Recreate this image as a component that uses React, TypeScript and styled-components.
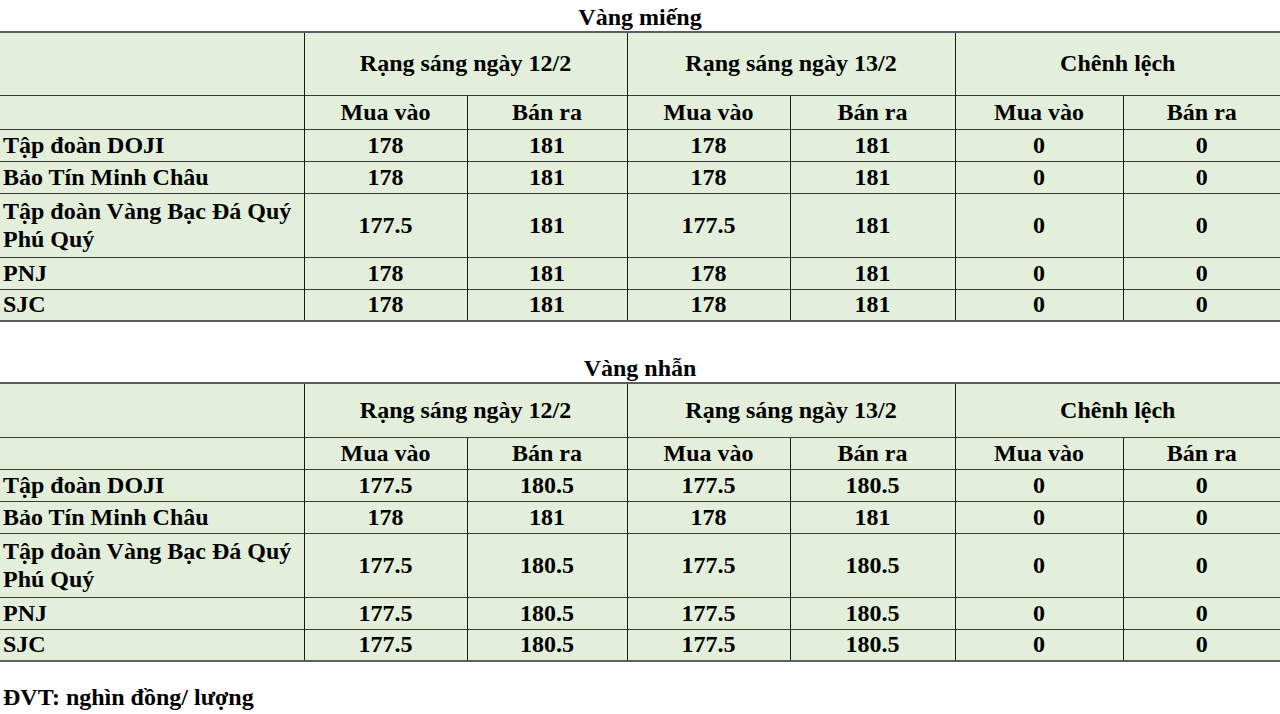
import React from "react";
import styled, { createGlobalStyle } from "styled-components";

const Global = createGlobalStyle`
  html, body { margin: 0; padding: 0; background: #ffffff; }
  body { font-family: "Liberation Serif", "Times New Roman", serif; color: #000; }
`;

const Page = styled.div`
  width: 1280px;
  padding-top: 4px;
  font-weight: 700;
  font-size: 24px;
`;

const Title = styled.div<{ $gap?: number }>`
  text-align: center;
  line-height: 27px;
  height: 27px;
  margin-top: ${(p) => p.$gap ?? 0}px;
`;

const Table = styled.table`
  width: 1280px;
  border-collapse: collapse;
  table-layout: fixed;
  background: #e3eedb;
  border-top: 2px solid #5e5e5e;
  border-bottom: 2px solid #5e5e5e;
`;

const Row = styled.tr<{ $h: number }>`
  height: ${(p) => p.$h}px;
`;

const Cell = styled.td<{ $edge?: boolean }>`
  padding: 0 3px 1px;
  line-height: 28px;
  vertical-align: middle;
  text-align: center;
  border-top: 1px solid #3a3a3a;
  border-left: ${(p) => (p.$edge ? "none" : "1px solid #1a1a1a")};
`;

const NameCell = styled(Cell)`
  text-align: left;
  padding-left: 3px;
`;

const Note = styled.div`
  margin-top: 21px;
  padding-left: 3px;
  line-height: 28px;
`;

type Data = { name: string; h: number; v: string[] };

const widths = [304, 163, 160, 163, 165, 168, 157];

const GoldTable = ({ head, sub, rows }: { head: number; sub: number; rows: Data[] }) => (
  <Table>
    <colgroup>
      {widths.map((w, i) => (
        <col key={i} style={{ width: w }} />
      ))}
    </colgroup>
    <tbody>
      <Row $h={head}>
        <Cell $edge />
        <Cell colSpan={2}>Rạng sáng ngày 12/2</Cell>
        <Cell colSpan={2}>Rạng sáng ngày 13/2</Cell>
        <Cell colSpan={2}>Chênh lệch</Cell>
      </Row>
      <Row $h={sub}>
        <Cell $edge />
        <Cell>Mua vào</Cell>
        <Cell>Bán ra</Cell>
        <Cell>Mua vào</Cell>
        <Cell>Bán ra</Cell>
        <Cell>Mua vào</Cell>
        <Cell>Bán ra</Cell>
      </Row>
      {rows.map((r) => (
        <Row key={r.name} $h={r.h}>
          <NameCell $edge>{r.name}</NameCell>
          {r.v.map((x, i) => (
            <Cell key={i}>{x}</Cell>
          ))}
        </Row>
      ))}
    </tbody>
  </Table>
);

const names = [
  "Tập đoàn DOJI",
  "Bảo Tín Minh Châu",
  "Tập đoàn Vàng Bạc Đá Quý Phú Quý",
  "PNJ",
  "SJC",
];

const bar: Data[] = names.map((n, i) => ({
  name: n,
  h: i === 2 ? 64 : 32,
  v:
    i === 2
      ? ["177.5", "181", "177.5", "181", "0", "0"]
      : ["178", "181", "178", "181", "0", "0"],
}));

const ring: Data[] = names.map((n, i) => ({
  name: n,
  h: i === 2 ? 64 : 32,
  v:
    i === 1
      ? ["178", "181", "178", "181", "0", "0"]
      : ["177.5", "180.5", "177.5", "180.5", "0", "0"],
}));

export default function App() {
  return (
    <>
      <Global />
      <Page>
        <Title>Vàng miếng</Title>
        <GoldTable head={63} sub={34} rows={bar} />
        <Title $gap={33}>Vàng nhẫn</Title>
        <GoldTable head={54} sub={32} rows={ring} />
        <Note>ĐVT: nghìn đồng/ lượng</Note>
      </Page>
    </>
  );
}
